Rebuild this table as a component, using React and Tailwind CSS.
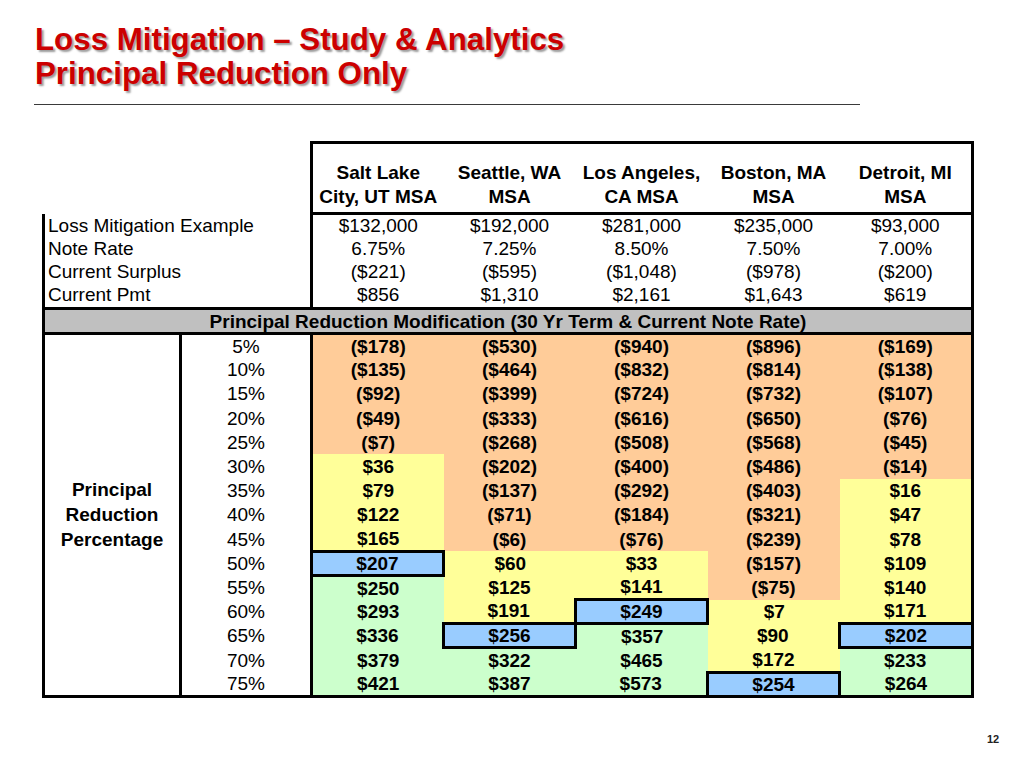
// Loss mitigation slide — principal reduction table
const cities = [
  ['Salt Lake', 'City, UT MSA'],
  ['Seattle, WA', 'MSA'],
  ['Los Angeles,', 'CA MSA'],
  ['Boston, MA', 'MSA'],
  ['Detroit, MI', 'MSA'],
];

const summary = [
  ['Loss Mitigation Example', ['$132,000', '$192,000', '$281,000', '$235,000', '$93,000']],
  ['Note Rate', ['6.75%', '7.25%', '8.50%', '7.50%', '7.00%']],
  ['Current Surplus', ['($221)', '($595)', '($1,048)', '($978)', '($200)']],
  ['Current Pmt', ['$856', '$1,310', '$2,161', '$1,643', '$619']],
];

const reductions = [
  ['5%', ['($178)', '($530)', '($940)', '($896)', '($169)']],
  ['10%', ['($135)', '($464)', '($832)', '($814)', '($138)']],
  ['15%', ['($92)', '($399)', '($724)', '($732)', '($107)']],
  ['20%', ['($49)', '($333)', '($616)', '($650)', '($76)']],
  ['25%', ['($7)', '($268)', '($508)', '($568)', '($45)']],
  ['30%', ['$36', '($202)', '($400)', '($486)', '($14)']],
  ['35%', ['$79', '($137)', '($292)', '($403)', '$16']],
  ['40%', ['$122', '($71)', '($184)', '($321)', '$47']],
  ['45%', ['$165', '($6)', '($76)', '($239)', '$78']],
  ['50%', ['$207', '$60', '$33', '($157)', '$109']],
  ['55%', ['$250', '$125', '$141', '($75)', '$140']],
  ['60%', ['$293', '$191', '$249', '$7', '$171']],
  ['65%', ['$336', '$256', '$357', '$90', '$202']],
  ['70%', ['$379', '$322', '$465', '$172', '$233']],
  ['75%', ['$421', '$387', '$573', '$254', '$264']],
];

// row where each market first breaks even with the target (blue, boxed)
const targets = [9, 12, 11, 14, 12];

function cellClass(value, row, col) {
  const last = col === 4 ? ' border-r-[3px] border-r-black' : '';
  const first = col === 0 ? ' border-l-[3px] border-l-black' : '';
  if (row === targets[col]) return 'bg-[#99ccff] border-[3px] border-black';
  if (value.startsWith('(')) return 'bg-[#ffcc99]' + first + last;
  if (row < targets[col]) return 'bg-[#ffff99]' + first + last;
  return 'bg-[#ccffcc]' + first + last;
}

export default function App() {
  return (
    <div className="w-[1024px] h-[768px] bg-white relative font-['Liberation_Sans',Arial,sans-serif] text-black overflow-hidden">
      {/* Title */}
      <div className="pt-[23px] pl-[35px]">
        <h1 className="text-[31.3px] leading-[34px] font-bold text-[#cc0000] [text-shadow:2px_2px_2px_#9a9a9a]">
          Loss Mitigation – Study &amp; Analytics
          <br />
          Principal Reduction Only
        </h1>
      </div>
      <div className="ml-[34px] mt-[13px] w-[826px] h-px bg-[#3a3a3a]"></div>

      {/* Table */}
      <div className="pl-[42px] pt-[36px]">
        <table className="table-fixed border-collapse text-[19px] leading-none">
          <colgroup>
            <col className="w-[137px]" />
            <col className="w-[131px]" />
            <col className="w-[132px]" />
            <col className="w-[132px]" />
            <col className="w-[132px]" />
            <col className="w-[132px]" />
            <col className="w-[133px]" />
          </colgroup>
          <tbody>
            <tr className="h-[71px]">
              <td colSpan={2}></td>
              {cities.map((c, i) => (
                <td
                  key={i}
                  className={`align-bottom text-center font-bold leading-[24px] pb-[3px] border-t-[3px] border-b-[3px] border-black ${i === 0 ? 'border-l-[3px]' : ''} ${i === 4 ? 'border-r-[3px]' : ''}`}
                >
                  {c[0]}
                  <br />
                  {c[1]}
                </td>
              ))}
            </tr>
            {summary.map(([label, vals], r) => (
              <tr key={label} className={r === 3 ? 'h-[26px]' : 'h-[23px]'}>
                <td colSpan={2} className={`border-l-[3px] border-black pl-[3px] ${r === 3 ? 'align-top pt-[2px]' : ''}`}>
                  {label}
                </td>
                {vals.map((v, i) => (
                  <td
                    key={i}
                    className={`text-center border-black ${i === 0 ? 'border-l-[3px]' : ''} ${i === 4 ? 'border-r-[3px]' : ''} ${r === 3 ? 'align-top pt-[2px]' : ''}`}
                  >
                    {v}
                  </td>
                ))}
              </tr>
            ))}
            <tr className="h-[25px]">
              <td colSpan={7} className="bg-[#c0c0c0] text-center font-bold border-[3px] border-black">
                Principal Reduction Modification (30 Yr Term &amp; Current Note Rate)
              </td>
            </tr>
            {reductions.map(([pct, vals], r) => (
              <tr key={pct} className="h-[24.2px]">
                {r === 0 && (
                  <td rowSpan={15} className="text-center font-bold leading-[25px] border-[3px] border-black">
                    Principal
                    <br />
                    Reduction
                    <br />
                    Percentage
                  </td>
                )}
                <td className={`text-center border-l-[3px] border-r-[3px] border-black ${r === 14 ? 'border-b-[3px]' : ''}`}>{pct}</td>
                {vals.map((v, i) => (
                  <td
                    key={i}
                    className={`text-center font-bold border-black ${cellClass(v, r, i)} ${r === 14 ? 'border-b-[3px] border-b-black' : ''}`}
                  >
                    {v}
                  </td>
                ))}
              </tr>
            ))}
          </tbody>
        </table>
      </div>

      {/* Page number */}
      <div className="absolute left-[987px] top-[731px] text-[11px] font-bold text-[#222]">12</div>
    </div>
  );
}
